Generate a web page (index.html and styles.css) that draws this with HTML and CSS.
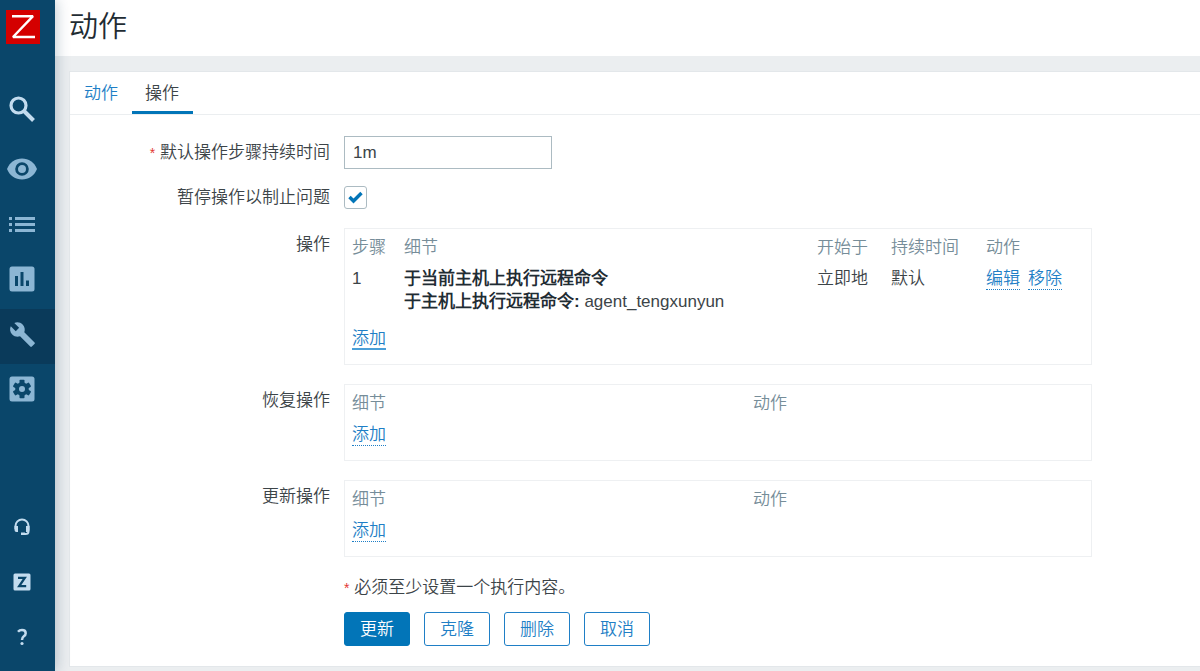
FILE: index.html
```html
<!DOCTYPE html>
<html lang="zh-CN">
<head>
<meta charset="utf-8">
<title>动作</title>
<link rel="stylesheet" href="styles.css">
</head>
<body>
<div class="layout">
  <aside class="sidebar">
    <a class="logo" href="#" aria-label="Zabbix">
      <svg viewBox="0 0 34 34" width="34" height="34"><rect width="34" height="34" fill="#d40000"/><path d="M6 6.200H27L7 27H29" fill="none" stroke="#fff" stroke-width="2.400" stroke-linejoin="bevel"/></svg>
    </a>
    <button class="nav-item search" type="button" aria-label="搜索">
      <svg viewBox="0 0 28 28" width="28" height="28"><circle cx="10.500" cy="10.500" r="7.500" fill="none" stroke="#c3dcef" stroke-width="3.200"/><path d="M16 16L25.500 25.500" stroke="#c3dcef" stroke-width="4"/></svg>
    </button>
    <nav class="menu">
      <a class="nav-item" href="#" aria-label="监测">
        <svg viewBox="0 0 30 22" width="30" height="22"><path d="M15 .5C8.500 .5 2.500 4.500 0 11c2.500 6.500 8.500 10.500 15 10.500S27.500 17.500 30 11C27.500 4.500 21.500 .5 15 .5z" fill="#8cb6d4"/><circle cx="15" cy="11" r="5.400" fill="none" stroke="#0a466a" stroke-width="2.800"/></svg>
      </a>
      <a class="nav-item" href="#" aria-label="资产记录">
        <svg viewBox="0 0 26 16" width="26" height="16"><path d="M0 1h3v3H0zM6 1h20v3H6zM0 7h3v3H0zM6 7h20v3H6zM0 13h3v3H0zM6 13h20v3H6z" fill="#8cb6d4"/></svg>
      </a>
      <a class="nav-item" href="#" aria-label="报表">
        <svg viewBox="0 0 26 26" width="26" height="26"><rect x=".5" y=".5" width="25" height="25" rx="2.500" fill="#8cb6d4"/><path d="M6 10h3v10H6zM11.500 6h3v14h-3zM17 14.500h3V20h-3z" fill="#0a466a"/></svg>
      </a>
      <a class="nav-item active" href="#" aria-label="配置">
        <svg viewBox="0 0 24 24" width="27" height="27"><path d="M22.700 19l-9.100-9.100c.9-2.300.4-5-1.500-6.900-2-2-5-2.400-7.400-1.300L9 6 6 9 1.600 4.700C.4 7.100.9 10.100 2.900 12.100c1.900 1.900 4.600 2.400 6.900 1.500l9.100 9.100c.4.400 1 .4 1.400 0l2.300-2.300c.5-.4.500-1.100.1-1.400z" fill="#8cb6d4"/></svg>
      </a>
      <a class="nav-item" href="#" aria-label="管理">
        <svg viewBox="0 0 26 26" width="26" height="26"><rect x=".5" y=".5" width="25" height="25" rx="2.500" fill="#8cb6d4"/><g transform="translate(13 13)" fill="#0a466a"><circle r="6.800"/><rect x="-2.500" y="-9.200" width="5" height="18.400" rx=".8"/><rect x="-2.500" y="-9.200" width="5" height="18.400" rx=".8" transform="rotate(60)"/><rect x="-2.500" y="-9.200" width="5" height="18.400" rx=".8" transform="rotate(120)"/><circle r="3" fill="#8cb6d4"/></g></svg>
      </a>
    </nav>
    <nav class="menu menu-bottom">
      <a class="nav-item" href="#" aria-label="支持">
        <svg viewBox="0 0 18 18" width="18" height="18"><path d="M2.500 11V8a6.500 6.500 0 0 1 13 0v5.500q0 2.500-3 2.500H9" fill="none" stroke="#c3dcef" stroke-width="2"/><path d="M1.500 8H5v6H3.500q-2 0-2-2zM13 8h3.500v4q0 2-2 2H13zM8 14.500h4V17H8z" fill="#c3dcef"/></svg>
      </a>
      <a class="nav-item" href="#" aria-label="Zabbix 分享">
        <svg viewBox="0 0 18 18" width="18" height="18"><rect x=".5" y=".5" width="17" height="17" rx="1.500" fill="#c3dcef"/><path d="M5 4.800H11.800L6.200 13.200H13.200" fill="none" stroke="#0a466a" stroke-width="2.300"/></svg>
      </a>
      <a class="nav-item" href="#" aria-label="帮助">
        <svg viewBox="0 0 12 18" width="12" height="18"><path d="M2 3.800Q3.500 2 6 2q3.700 0 3.700 3.200 0 1.800-1.900 3.100Q6 9.600 6 12" fill="none" stroke="#c3dcef" stroke-width="2.500"/><circle cx="6" cy="15.500" r="1.600" fill="#c3dcef"/></svg>
      </a>
    </nav>
  </aside>

  <div class="page">
    <header class="page-header"><h1>动作</h1></header>
    <main class="card">
      <nav class="tabs">
        <a class="tab" href="#">动作</a>
        <a class="tab selected" href="#" aria-current="page">操作</a>
      </nav>
      <form class="form">
        <label class="label" for="duration"><span class="required">*</span> 默认操作步骤持续时间</label>
        <div><input class="textbox" id="duration" type="text" value="1m"></div>

        <label class="label label-check" for="pause">暂停操作以制止问题</label>
        <div class="check-field"><input class="checkbox" id="pause" type="checkbox" checked></div>

        <span class="label" id="ops">操作</span>
        <div class="box">
          <table class="steps" aria-labelledby="ops">
            <colgroup><col class="col-step"><col class="col-details"><col class="col-start"><col class="col-duration"><col></colgroup>
            <thead><tr><th>步骤</th><th>细节</th><th>开始于</th><th>持续时间</th><th>动作</th></tr></thead>
            <tbody>
              <tr><td>1</td><td><b>于当前主机上执行远程命令</b><br><b>于主机上执行远程命令:</b> agent_tengxunyun</td><td>立即地</td><td>默认</td><td><div class="links"><a class="link" href="#">编辑</a><a class="link" href="#">移除</a></div></td></tr>
              <tr class="add-row"><td colspan="5"><a class="link focused" href="#">添加</a></td></tr>
            </tbody>
          </table>
        </div>

        <span class="label" id="recovery">恢复操作</span>
        <div class="box">
          <table aria-labelledby="recovery">
            <colgroup><col class="col-half"><col></colgroup>
            <thead><tr><th>细节</th><th>动作</th></tr></thead>
            <tbody><tr><td colspan="2"><a class="link" href="#">添加</a></td></tr></tbody>
          </table>
        </div>

        <span class="label" id="update">更新操作</span>
        <div class="box">
          <table aria-labelledby="update">
            <colgroup><col class="col-half"><col></colgroup>
            <thead><tr><th>细节</th><th>动作</th></tr></thead>
            <tbody><tr><td colspan="2"><a class="link" href="#">添加</a></td></tr></tbody>
          </table>
        </div>

        <div class="footer">
          <p class="note"><span class="required">*</span> 必须至少设置一个执行内容。</p>
          <div class="buttons">
            <button class="button primary" type="button">更新</button>
            <button class="button" type="button">克隆</button>
            <button class="button" type="button">删除</button>
            <button class="button" type="button">取消</button>
          </div>
        </div>
      </form>
    </main>
  </div>
</div>
</body>
</html>
```
FILE: styles.css
```css
* { box-sizing: border-box; }
body {
  margin: 0;
  background: #ebeef0;
  color: #3c4448;
  font: 350 17px/23px "Liberation Sans", "Noto Sans CJK SC DemiLight", "Noto Sans CJK SC", sans-serif;
}
a { color: #1f7fc6; text-decoration: none; }
.layout { display: flex; min-height: 100vh; }

.sidebar {
  display: flex;
  flex-direction: column;
  flex: none;
  width: 55px;
  padding: 10px 0 4px;
  background: #0a466a;
  box-shadow: 0 0 14px rgba(10, 50, 80, .3);
  z-index: 1;
}
.logo { display: flex; padding-left: 6px; }
.nav-item {
  display: flex;
  align-items: center;
  justify-content: center;
  width: 100%;
  height: 55px;
  padding: 0 11px 5px 0;
  border: 0;
  background: none;
}
.nav-item.active { background: #0a3a5a; }
.search { margin: 40px 0 5px; }
.menu-bottom { margin-top: auto; }

.page { flex: 1; min-width: 0; }
.page-header { padding: 7px 14px 9px; background: #fff; }
h1 { margin: 0; font-size: 29px; line-height: 40px; font-weight: 350; color: #1f2c33; }
.card {
  margin: 15px 0 4px 14px;
  border: 1px solid #e3e7ea;
  border-right: 0;
  background: #fff;
}
.tabs { display: flex; border-bottom: 1px solid #ebeef0; padding-left: 1px; }
.tab { padding: 10px 14px 6px 13px; border-bottom: 3px solid transparent; }
.tab.selected { color: #3c4448; border-color: #0275b8; }

.form {
  display: grid;
  grid-template-columns: 260px minmax(0, 1fr);
  column-gap: 14px;
  padding: 21px 0 20px;
}
.label { padding-top: 5px; text-align: right; }
.label-check { padding-top: 0; }
.required { color: #e33734; font-size: 14px; }
.textbox {
  display: block;
  width: 208px;
  max-width: 100%;
  height: 33px;
  margin-bottom: 17px;
  padding: 0 8px;
  border: 1px solid #acbbc2;
  background: #fff;
  color: #3c4448;
  font: inherit;
}
.check-field { padding-bottom: 19px; }
.checkbox {
  display: block;
  appearance: none;
  width: 23px;
  height: 23px;
  margin: 0;
  border: 1px solid #acbbc2;
  border-radius: 3px;
  background: #fff;
}
.checkbox:checked {
  background: #fff url("data:image/svg+xml,%3Csvg xmlns='http://www.w3.org/2000/svg' viewBox='0 0 21 21'%3E%3Cpath d='M4.500 10l4 4 8-8' fill='none' stroke='%230275b8' stroke-width='3.400'/%3E%3C/svg%3E") center / 21px no-repeat;
}

.box {
  width: 748px;
  max-width: 100%;
  margin-bottom: 19px;
  padding: 3px 0 10px;
  border: 1px solid #eef0f2;
}
table { width: 100%; border-collapse: collapse; table-layout: fixed; }
th, td { padding: 4px 0 4px 7px; text-align: left; vertical-align: top; font-weight: inherit; }
th { color: #768d99; }
b { font-weight: 700; color: #1f2c33; }
.col-step { width: 52px; }
.col-details { width: 413px; }
.col-start { width: 74px; }
.col-duration { width: 95px; }
.col-half { width: 401px; }
.add-row td { padding-top: 10px; }
.links { display: flex; gap: 8px; }
.link { display: inline-block; height: 23px; border-bottom: 1px dotted #1f7fc6; vertical-align: top; }
.link.focused { border-bottom: 2px solid #4a9fd8; }

.footer { grid-column: 2; }
.note { margin: 0 0 12px; }
.buttons { display: flex; flex-wrap: wrap; gap: 14px; }
.button {
  height: 34px;
  padding: 0 15px;
  border: 1px solid #1f7fc6;
  border-radius: 3px;
  background: #fff;
  color: #1f7fc6;
  font: inherit;
}
.button.primary { background: #0275b8; border-color: #0275b8; color: #fff; }
```
